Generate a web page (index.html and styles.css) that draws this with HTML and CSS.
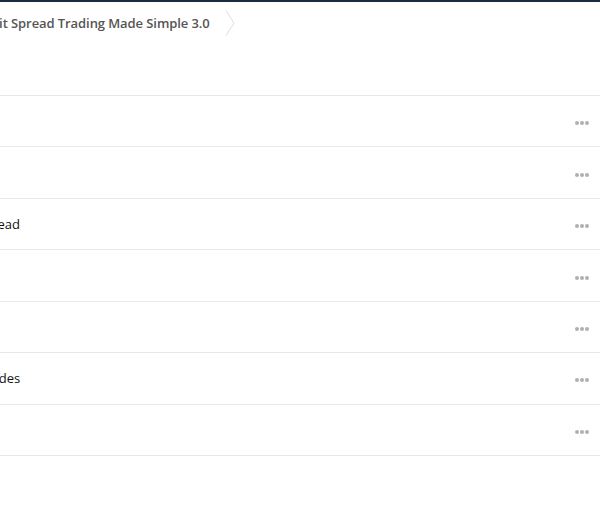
FILE: index.html
```html
<!DOCTYPE html>
<html lang="en">
<head>
    <meta charset="UTF-8">
    <title>Course Lessons</title>
    <link rel="stylesheet" href="styles.css">
</head>
<body>

<div class="page">
    <div class="crumbs">
        <span class="crumb">Credit Spread Trading Made Simple 3.0</span>
        <svg class="crumb-sep" width="10" height="26" viewBox="0 0 10 26">
            <path d="M1 0.5 L9 13 L1 25.5" fill="none" stroke="#ddd" stroke-width="1"/>
        </svg>
    </div>

    <ul class="lessons">
        <li class="lesson"><span class="lesson-title">Welcome</span><span class="more"><i></i><i></i><i></i></span></li>
        <li class="lesson"><span class="lesson-title">Course Intro</span><span class="more"><i></i><i></i><i></i></span></li>
        <li class="lesson"><span class="lesson-title">Anatomy of a Credit Spread</span><span class="more"><i></i><i></i><i></i></span></li>
        <li class="lesson"><span class="lesson-title">Picking Strikes</span><span class="more"><i></i><i></i><i></i></span></li>
        <li class="lesson"><span class="lesson-title">Entry Rules</span><span class="more"><i></i><i></i><i></i></span></li>
        <li class="lesson"><span class="lesson-title">Handling Your Open Trades</span><span class="more"><i></i><i></i><i></i></span></li>
        <li class="lesson"><span class="lesson-title">Wrap Up</span><span class="more"><i></i><i></i><i></i></span></li>
    </ul>
</div>

</body>
</html>
```

FILE: styles.css
```css
body {
    margin: 0;
    font-family: "Open Sans", Arial, sans-serif;
    background: #fff;
    overflow: hidden;
}
.page {
    border-top: 2px solid #1b2a3f;
    margin-left: -160px;
}
.crumbs {
    display: flex;
    align-items: flex-start;
    gap: 15px;
    height: 93px;
    padding-left: 130px;
}
.crumb {
    font-size: 13px;
    font-weight: 600;
    letter-spacing: -0.08px;
    color: #555;
    margin-top: 12px;
}
.crumb-sep {
    margin-top: 8px;
}
.lessons {
    list-style: none;
    margin: 0;
    padding: 0;
    border-top: 1px solid #e8e8e8;
}
.lesson {
    display: flex;
    align-items: center;
    justify-content: space-between;
    height: 50.45px;
    border-bottom: 1px solid #e8e8e8;
    padding-left: 13px;
    padding-right: 11px;
    font-size: 13px;
    color: #111;
}
.more {
    display: flex;
    gap: 1px;
    margin-top: 4px;
}
.more i {
    width: 4px;
    height: 4px;
    border-radius: 50%;
    background: #b0b0b0;
}
```
